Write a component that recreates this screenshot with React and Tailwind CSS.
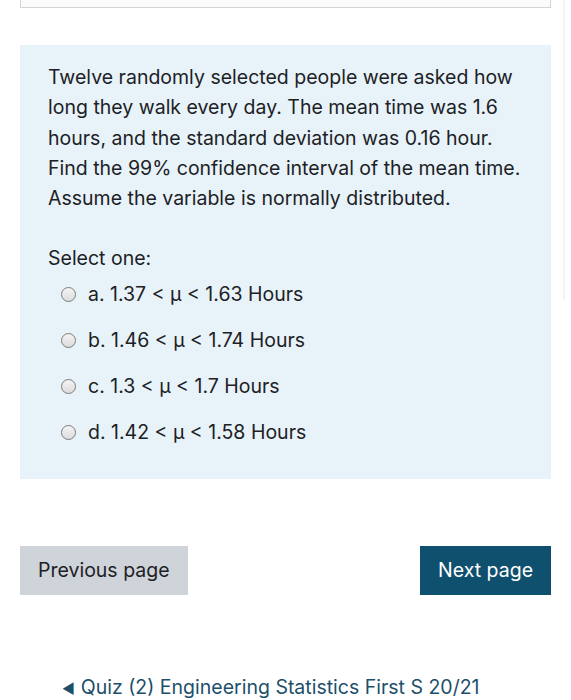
import React from 'react';

const options = [
  'a. 1.37 < μ < 1.63 Hours',
  'b. 1.46 < μ < 1.74 Hours',
  'c. 1.3 < μ < 1.7 Hours',
  'd. 1.42 < μ < 1.58 Hours',
];

export default function App() {
  return (
    <div className="relative min-h-[700px] w-[571px] overflow-hidden bg-white text-[#1d2125]" style={{ fontFamily: 'Inter, "Noto Sans", sans-serif' }}>
      {/* faint scrollbar track */}
      <div className="absolute right-[6px] top-0 h-[300px] w-[2px] bg-[#f3f3f3]" />

      <div className="mx-[20px] h-[8px] border-x border-b border-[#d4d4d8] bg-[#fbfbfb]" />

      <div className="mx-[20px] mt-[37px] bg-[#e7f3f9] pl-[28px] pr-[18px] pt-[17px] pb-[32px]">
        <p className="text-[19.5px] leading-[30.3px]">
          Twelve randomly selected people were asked how long they walk every day. The mean time was 1.6 hours, and the standard deviation was 0.16 hour. Find the 99% confidence interval of the mean time. Assume the variable is normally distributed.
        </p>
        <p className="mt-[30px] text-[19.5px] leading-[30px]">Select one:</p>
        <div className="mt-[6px] flex flex-col gap-[16px] pl-[13px]">
          {options.map((o) => (
            <label key={o} className="flex h-[30px] items-center gap-[12px] text-[19.5px]">
              <span className="h-[15px] w-[15px] shrink-0 rounded-full border border-[#7b7b7b] bg-gradient-to-b from-[#f4f4f4] to-[#dcdcdc]" />
              <span>{o}</span>
            </label>
          ))}
        </div>
      </div>

      <div className="mx-[20px] mt-[67px] flex items-center justify-between">
        <button className="h-[49px] bg-[#ced4da] px-[18px] text-[19.5px] text-[#1d2125]">Previous page</button>
        <button className="h-[49px] bg-[#10506f] px-[18px] text-[19.5px] text-white">Next page</button>
      </div>

      <div className="mt-[78px] pl-[62px] text-[19.5px] text-[#1d4f6a]">
        <span className="mr-[6px] text-[14px]">◀</span>Quiz (2) Engineering Statistics First S 20/21
      </div>
    </div>
  );
}
